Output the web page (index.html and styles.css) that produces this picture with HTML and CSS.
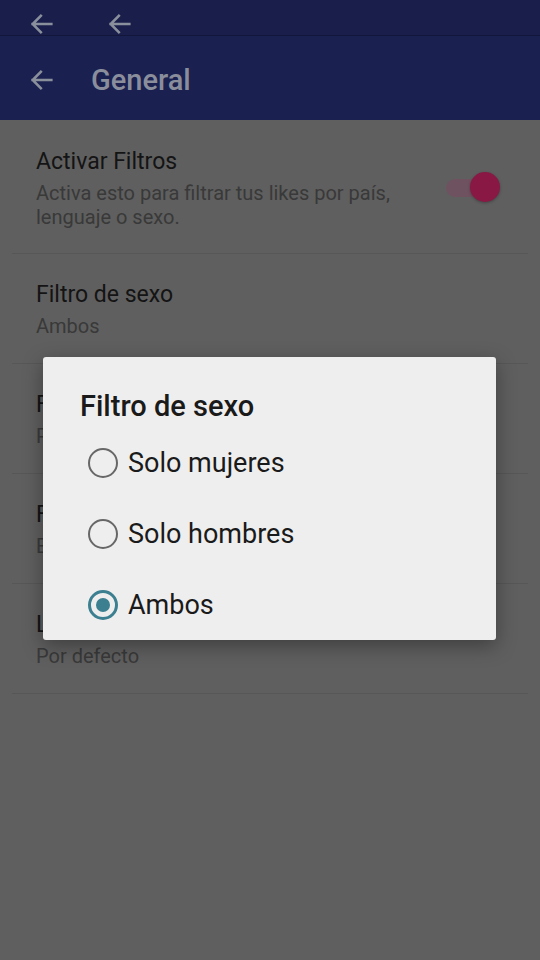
FILE: index.html
```html
<!DOCTYPE html>
<html>
<head>
  <title>General</title>
  <link rel="stylesheet" href="styles.css">
</head>
<body>
  <div class="screen">
    <div class="topstrip">
      <svg class="arrow" viewBox="0 0 24 24"><path d="M20 12H4M11 5l-7 7 7 7"/></svg>
      <svg class="arrow" viewBox="0 0 24 24"><path d="M20 12H4M11 5l-7 7 7 7"/></svg>
    </div>
    <div class="appbar">
      <svg class="arrow" viewBox="0 0 24 24"><path d="M20 12H4M11 5l-7 7 7 7"/></svg>
      <span class="appbar-title">General</span>
    </div>

    <div class="list">
      <div class="item item-switch">
        <div class="item-text">
          <div class="item-title">Activar Filtros</div>
          <div class="item-sub">Activa esto para filtrar tus likes por país, lenguaje o sexo.</div>
        </div>
        <div class="switch">
          <div class="switch-track"></div>
          <div class="switch-thumb"></div>
        </div>
      </div>
      <div class="item">
        <div class="item-title">Filtro de sexo</div>
        <div class="item-sub">Ambos</div>
      </div>
      <div class="item">
        <div class="item-title">Filtro de país</div>
        <div class="item-sub">Por defecto</div>
      </div>
      <div class="item">
        <div class="item-title">Filtro de lenguaje</div>
        <div class="item-sub">Español</div>
      </div>
      <div class="item">
        <div class="item-title">Lenguaje de la app</div>
        <div class="item-sub">Por defecto</div>
      </div>
    </div>

    <div class="dialog">
      <div class="dialog-title">Filtro de sexo</div>
      <div class="option">
        <span class="radio"></span>
        <span class="option-label">Solo mujeres</span>
      </div>
      <div class="option">
        <span class="radio"></span>
        <span class="option-label">Solo hombres</span>
      </div>
      <div class="option">
        <span class="radio checked"></span>
        <span class="option-label">Ambos</span>
      </div>
    </div>
  </div>
</body>
</html>
```

FILE: styles.css
```css
body {
  margin: 0;
  font-family: Roboto, "Noto Sans", sans-serif;
  background-color: #5f5f5f;
}

.screen {
  position: relative;
  width: 540px;
  height: 960px;
  overflow: hidden;
  background-color: #5f5f5f;
}

.arrow {
  width: 28px;
  height: 28px;
  fill: none;
  stroke: #8a8f9c;
  stroke-width: 2.2;
  stroke-linecap: square;
}

.topstrip {
  display: flex;
  align-items: center;
  gap: 50px;
  height: 36px;
  padding: 12px 0 0 28px;
  box-sizing: border-box;
  background-color: #191e4b;
  border-bottom: 1px solid #12163a;
}

.appbar {
  display: flex;
  align-items: center;
  height: 84px;
  padding: 3px 0 0 28px;
  box-sizing: border-box;
  background-color: #1a204f;
}

.appbar-title {
  margin-left: 35px;
  font-size: 29px;
  font-weight: 500;
  color: #8a8e9c;
}

.list {
  padding: 0 12px;
}

.item {
  display: flex;
  flex-direction: column;
  justify-content: center;
  height: 109px;
  padding: 0 24px;
  border-bottom: 1px solid #575757;
}

.item-switch {
  flex-direction: row;
  align-items: center;
  justify-content: space-between;
  height: 133px;
}

.item-title {
  font-size: 23px;
  line-height: 30px;
  color: #141414;
}

.item-sub {
  font-size: 20px;
  line-height: 24px;
  margin-top: 4px;
  color: #393939;
}

.item-switch .item-text {
  width: 400px;
  margin-top: 2px;
}

.switch {
  position: relative;
  width: 54px;
  height: 34px;
  margin-right: 4px;
}

.switch-track {
  position: absolute;
  left: 0;
  top: 9px;
  width: 44px;
  height: 18px;
  border-radius: 9px;
  background-color: #6f5260;
}

.switch-thumb {
  position: absolute;
  right: 0;
  top: 2px;
  width: 30px;
  height: 30px;
  border-radius: 50%;
  background-color: #8a1845;
  box-shadow: 0 1px 3px rgba(0, 0, 0, 0.3);
}

.dialog {
  position: absolute;
  left: 43px;
  top: 357px;
  width: 453px;
  height: 283px;
  box-sizing: border-box;
  padding: 32px 0 0 37px;
  background-color: #eeeeee;
  border-radius: 3px;
  box-shadow: 0 6px 20px rgba(0, 0, 0, 0.35);
}

.dialog-title {
  font-size: 29px;
  font-weight: 500;
  line-height: 34px;
  color: #1a1a1a;
  margin-bottom: 4px;
}

.option {
  display: flex;
  align-items: center;
  gap: 10px;
  height: 71px;
  padding-left: 8px;
}

.radio {
  box-sizing: border-box;
  width: 30px;
  height: 30px;
  border: 2.5px solid #676767;
  border-radius: 50%;
  display: flex;
  align-items: center;
  justify-content: center;
}

.radio.checked {
  border: 3px solid #3b7f91;
}

.radio.checked::after {
  content: "";
  width: 14px;
  height: 14px;
  border-radius: 50%;
  background-color: #3b7f91;
}

.option-label {
  font-size: 27px;
  line-height: 34px;
  color: #1a1a1a;
}
```
